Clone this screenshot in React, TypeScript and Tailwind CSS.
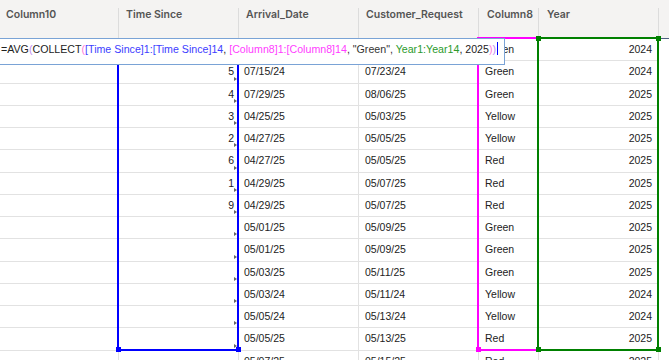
import React from "react";

type Row = { ts: string; arr: string; cr: string; c8: string; yr: string };

const rows: Row[] = [
  { ts: "", arr: "", cr: "", c8: "Green", yr: "2024" },
  { ts: "5", arr: "07/15/24", cr: "07/23/24", c8: "Green", yr: "2024" },
  { ts: "4", arr: "07/29/25", cr: "08/06/25", c8: "Green", yr: "2025" },
  { ts: "3", arr: "04/25/25", cr: "05/03/25", c8: "Yellow", yr: "2025" },
  { ts: "2", arr: "04/27/25", cr: "05/05/25", c8: "Yellow", yr: "2025" },
  { ts: "6", arr: "04/27/25", cr: "05/05/25", c8: "Red", yr: "2025" },
  { ts: "1", arr: "04/29/25", cr: "05/07/25", c8: "Red", yr: "2025" },
  { ts: "9", arr: "04/29/25", cr: "05/07/25", c8: "Red", yr: "2025" },
  { ts: "", arr: "05/01/25", cr: "05/09/25", c8: "Green", yr: "2025" },
  { ts: "", arr: "05/01/25", cr: "05/09/25", c8: "Green", yr: "2025" },
  { ts: "", arr: "05/03/25", cr: "05/11/25", c8: "Green", yr: "2025" },
  { ts: "", arr: "05/03/24", cr: "05/11/24", c8: "Yellow", yr: "2024" },
  { ts: "", arr: "05/05/24", cr: "05/13/24", c8: "Yellow", yr: "2024" },
  { ts: "", arr: "05/05/25", cr: "05/13/25", c8: "Red", yr: "2025" },
  { ts: "", arr: "05/07/25", cr: "05/15/25", c8: "Red", yr: "2025" },
];

const headers = [
  { label: "Column10", w: "w-[119px] pl-[6px]" },
  { label: "Time Since", w: "w-[120px] pl-[7px]" },
  { label: "Arrival_Date", w: "w-[120px] pl-[7px]" },
  { label: "Customer_Request", w: "w-[120px] pl-[7px]" },
  { label: "Column8", w: "w-[60px] pl-[8px]" },
  { label: "Year", w: "w-[120px] pl-[8px]" },
];

function Square({ cls }: { cls: string }) {
  return <div className={`absolute w-[5px] h-[5px] ${cls}`} />;
}

export default function App() {
  return (
    <div className="relative w-[669px] h-[360px] overflow-hidden bg-white font-['Liberation_Sans',Arial,sans-serif] text-[#222]">
      {/* header */}
      <div className="flex h-[39px] pt-[8px] bg-[#f4f3f2] border-b border-[#4d5f80]">
        {headers.map((h) => (
          <div
            key={h.label}
            className={`${h.w} h-[30px] shrink-0 border-r border-[#dcdcdc] font-['Inter',sans-serif] font-semibold text-[10.5px] leading-[14px] text-[#555]`}
          >
            {h.label}
          </div>
        ))}
      </div>

      {/* rows */}
      <div className="flex flex-col">
        {rows.map((r, i) => (
          <div key={i} className="flex h-[22.25px] shrink-0 text-[10.5px] leading-[13px]">
            <div className="w-[119px] shrink-0 border-b border-r border-[#e2e2e2]" />
            <div className="relative w-[120px] shrink-0 border-b border-r border-[#e2e2e2] flex items-center justify-end pr-[4px]">
              {r.ts}
              {i > 0 && i < 14 && (
                <div className="absolute right-[1px] bottom-[2px] w-0 h-0 border-l-[3px] border-l-[#666] border-y-[2px] border-y-transparent" />
              )}
            </div>
            <div className="w-[120px] shrink-0 border-b border-r border-[#e2e2e2] flex items-center pl-[5px]">{r.arr}</div>
            <div className="w-[120px] shrink-0 border-b border-r border-[#e2e2e2] flex items-center pl-[6px]">{r.cr}</div>
            <div className="w-[60px] shrink-0 border-b border-r border-[#e2e2e2] flex items-center pl-[6px]">{r.c8}</div>
            <div className="w-[120px] shrink-0 border-b border-r border-[#e2e2e2] flex items-center justify-end pr-[6px]">{r.yr}</div>
          </div>
        ))}
      </div>

      {/* selection: Time Since (blue) */}
      <div className="absolute left-[117px] top-[38px] w-[122px] h-[313px] border-2 border-[#0000ff]" />
      {/* selection: Column8 (magenta) */}
      <div className="absolute left-[477px] top-[37px] w-[62px] h-[314px] border-2 border-[#ff00ff]" />
      {/* selection: Year (green) */}
      <div className="absolute left-[537px] top-[37px] w-[122px] h-[314px] border-2 border-[#008000]" />

      {/* corner handles */}
      <Square cls="left-[116px] top-[347px] bg-[#0000ff]" />
      <Square cls="left-[236px] top-[347px] bg-[#0000ff]" />
      <Square cls="left-[476px] top-[347px] bg-[#ff00ff]" />
      <Square cls="left-[536px] top-[36px] bg-[#008000]" />
      <Square cls="left-[656px] top-[36px] bg-[#008000]" />
      <Square cls="left-[536px] top-[347px] bg-[#008000]" />
      <Square cls="left-[656px] top-[347px] bg-[#008000]" />

      {/* formula editor */}
      <div className="absolute left-[-2px] top-[38px] w-[507px] h-[27px] bg-white border border-[#7aa3d6] pl-[2px] pt-[3px] whitespace-nowrap text-[10.65px] leading-[14px] font-['Liberation_Sans',Arial,sans-serif] text-[#222]">
        <span>=AVG</span>
        <span className="text-[#c08cf2]">(</span>
        <span>COLLECT</span>
        <span className="text-[#ff7ad9]">(</span>
        <span className="text-[#3d3dff]">[Time Since]1:[Time Since]14</span>
        <span>, </span>
        <span className="text-[#ff3dff]">[Column8]1:[Column8]14</span>
        <span className="text-[#333]">, "Green", </span>
        <span className="text-[#2b9a2b]">Year1:Year14</span>
        <span>, 2025</span>
        <span className="text-[#ff7ad9]">)</span>
        <span className="text-[#c08cf2]">)</span>
        <span className="inline-block w-[1px] h-[13px] bg-[#0000ff] align-[-2px] ml-[1px]" />
      </div>
    </div>
  );
}
